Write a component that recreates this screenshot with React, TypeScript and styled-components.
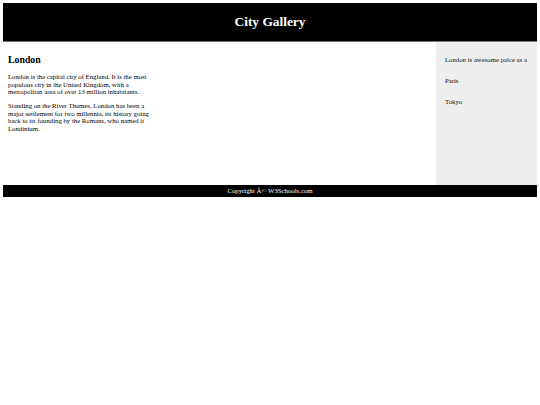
import React from 'react';
import styled, { createGlobalStyle } from 'styled-components';

const GlobalStyle = createGlobalStyle`
  body {
    margin: 3px;
    font-family: "Liberation Serif", "Times New Roman", serif;
    background: white;
    color: black;
  }
`;

const Page = styled.div`
  width: 100%;
  display: flex;
  flex-direction: column;
`;

const Header = styled.header`
  height: 38px;
  background-color: black;
  border-bottom: 1px solid #777;
  color: white;
  display: flex;
  align-items: center;
  justify-content: center;
`;

const Title = styled.h1`
  margin: 0;
  font-size: 13.4px;
  font-weight: bold;
`;

const Main = styled.div`
  display: flex;
  min-height: 143px;
`;

const Article = styled.article`
  flex: 1;
  padding: 12px 5px 6px;
`;

const Heading = styled.h2`
  margin: 0 0 8px;
  font-size: 9.8px;
  line-height: 11px;
  font-weight: bold;
`;

const Paragraph = styled.p`
  margin: 0 0 6.5px;
  max-width: 150px;
  font-size: 6.75px;
  line-height: 7.5px;
`;

const Aside = styled.aside`
  width: 92px;
  background-color: #eee;
  padding: 14px 0 0 9px;
  display: flex;
  flex-direction: column;
  gap: 13.5px;
`;

const AsideItem = styled.p`
  margin: 0;
  font-size: 6.75px;
  line-height: 7.5px;
  white-space: nowrap;
  overflow: hidden;
  color: #111;
`;

const Footer = styled.footer`
  height: 11.5px;
  line-height: 11.5px;
  background-color: black;
  color: white;
  text-align: center;
  font-size: 6.75px;
`;

const App = () => {
  return (
    <>
      <GlobalStyle />
      <Page>
        <Header>
          <Title>City Gallery</Title>
        </Header>
        <Main>
          <Article>
            <Heading>London</Heading>
            <Paragraph>
              London is the capital city of England. It is the most populous
              city in the United Kingdom, with a metropolitan area of over 13
              million inhabitants.
            </Paragraph>
            <Paragraph>
              Standing on the River Thames, London has been a major settlement
              for two millennia, its history going back to its founding by the
              Romans, who named it Londinium.
            </Paragraph>
          </Article>
          <Aside>
            <AsideItem>London is awesome palce as a</AsideItem>
            <AsideItem>Paris</AsideItem>
            <AsideItem>Tokyo</AsideItem>
          </Aside>
        </Main>
        <Footer>Copyright Â© W3Schools.com</Footer>
      </Page>
    </>
  );
};

export default App;
